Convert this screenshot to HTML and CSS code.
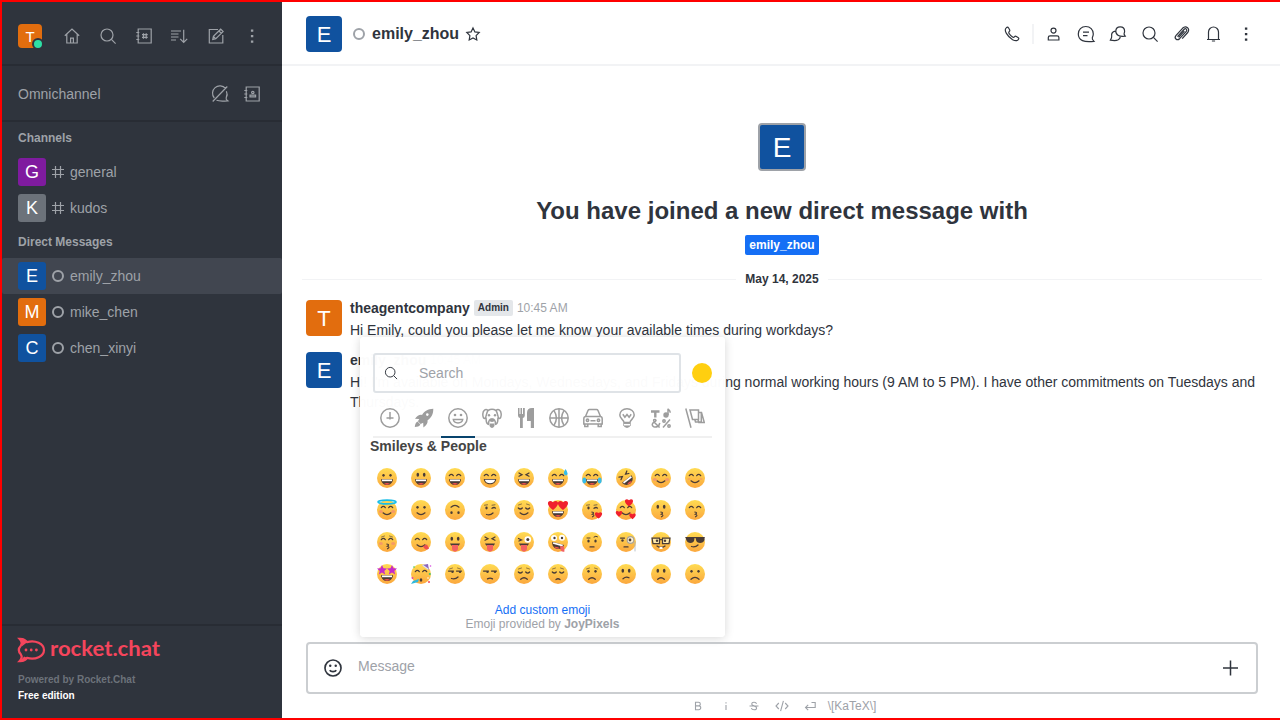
FILE: index.html
```html
<!DOCTYPE html>
<html lang="en">
<head>
<meta charset="utf-8">
<title>emily_zhou</title>
<link rel="stylesheet" href="styles.css">
</head>
<body>
<svg class="defs" aria-hidden="true">
  <defs>
    <symbol id="search" viewBox="0 0 20 20"><circle cx="9" cy="9" r="6"/><path d="M13.400 13.400 17.600 17.600"/></symbol>
    <symbol id="kebab" viewBox="0 0 20 20"><path class="solid" d="M8.900 3.400h2.400v2.300H8.900zM8.900 8.900h2.400v2.300H8.900zM8.900 14.400h2.400v2.300H8.900z"/></symbol>
    <symbol id="hash" viewBox="0 0 12 12"><path d="M3.500 0v12M8.500 0v12M0 3.500h12M0 8.500h12"/></symbol>
  </defs>
</svg>
<div class="app">
  <aside class="sidebar">
    <header class="sidebar-top">
      <div class="avatar avatar-24 orange">T<span class="online"></span></div>
      <svg class="icon home" viewBox="0 0 20 20"><path d="M2.800 9.700 10 3l7.200 6.700M4.800 8.300V17h10.400V8.300M8.600 17v-4.800h2.800V17"/></svg>
      <svg class="icon"><use href="#search"/></svg>
      <svg class="icon" viewBox="0 0 20 20"><path d="M4.200 3h13v14h-13zM2.300 6.500h3M2.300 10h3M2.300 13.500h3M9.500 7.300v5.400M12.200 7.300v5.400M8 8.700h5.700M8 11.300h5.700"/></svg>
      <svg class="icon sort" viewBox="0 0 20 20"><path d="M2 5h10M2 8h7.500M2 11h7.500M2 14h5M14.700 3.700v12.600M11.200 12.800l3.500 3.500 3.500-3.500"/></svg>
      <svg class="icon" viewBox="0 0 20 20"><path d="M12 3.500H3.300V17h13.500V9M6.800 13.400l.6-3 7.300-7.200 2.400 2.400-7.300 7.200zM13 5l2.300 2.300M7.400 10.400l2.400 2.400"/></svg>
      <svg class="icon"><use href="#kebab"/></svg>
    </header>
    <div class="omni">
      <span>Omnichannel</span>
      <svg class="icon" viewBox="0 0 20 20"><path d="M15.500 4.400A7.200 7.200 0 0 0 4.300 14M6.500 16.300c3 1.200 7.300.8 11.200.5-1.400-1-1.900-2-1.500-3.100 1.100-2 1.200-4.400.2-6.500M17.300 2.500 2.700 17.500"/></svg>
      <svg class="icon" viewBox="0 0 20 20"><path d="M4.200 3h13v14h-13zM2.300 6.500h3M2.300 10h3M2.300 13.500h3M8 12.900v-1.700h5.600v1.700z"/><circle cx="10.800" cy="8.500" r="1.200"/></svg>
    </div>
    <nav class="rooms">
      <h2>Channels</h2>
      <div class="room"><div class="avatar avatar-28 purple">G</div><svg class="room-hash"><use href="#hash"/></svg><span>general</span></div>
      <div class="room"><div class="avatar avatar-28 gray">K</div><svg class="room-hash"><use href="#hash"/></svg><span>kudos</span></div>
      <h2>Direct Messages</h2>
      <div class="room selected"><div class="avatar avatar-28 blue">E</div><i class="offline"></i><span>emily_zhou</span></div>
      <div class="room"><div class="avatar avatar-28 orange">M</div><i class="offline"></i><span>mike_chen</span></div>
      <div class="room"><div class="avatar avatar-28 blue">C</div><i class="offline"></i><span>chen_xinyi</span></div>
    </nav>
    <footer class="sidebar-footer">
      <svg class="logo" viewBox="0 0 144 26">
        <path class="logo-line" d="M1.500 1.800C5 1.600 7.500 3 9 5.100c8.300-2.400 17 1.500 17 7.900s-8.700 10.300-17 7.900C7.500 23 5 24.400 1.500 24.200 4.300 21.300 4 19 2.800 17.300c-2.400-2.600-2.400-6 0-8.600C4 7 4.300 4.700 1.500 1.800Z"/>
        <path class="logo-fill" d="M.2 1C5 .4 8 2.300 9.500 5L4 9.300C4.600 6 3 3.500.2 1ZM.2 25C5 25.600 8 23.700 9.500 21L6 19.500C5 22 2.500 22.500.2 25Z"/>
        <circle class="logo-fill" cx="8" cy="13" r="1.400"/><circle class="logo-fill" cx="13.200" cy="13" r="1.400"/><circle class="logo-fill" cx="18.400" cy="13" r="1.400"/>
        <text x="32" y="18.800" textLength="110" lengthAdjust="spacingAndGlyphs">rocket.chat</text>
      </svg>
      <p class="powered">Powered by Rocket.Chat</p>
      <p class="edition">Free edition</p>
    </footer>
  </aside>

  <main class="main">
    <header class="room-header">
      <div class="avatar avatar-36 blue">E</div>
      <i class="offline"></i>
      <h1>emily_zhou</h1>
      <svg class="star" viewBox="0 0 16 16"><path d="m8 1.900 1.900 4 4.300.6-3.100 3.100.7 4.400L8 11.900 4.200 14l.7-4.400-3.100-3.100 4.300-.6z"/></svg>
      <div class="actions">
        <svg class="icon" viewBox="0 0 20 20"><path d="M4.200 3.900c1-1 1.700-1 2.400.1l1 1.700c.4.700.3 1.300-.4 1.900-.8.700-.5 1.300.1 2.200.8 1.300 1.700 2.200 2.900 3 .9.600 1.500.8 2.200 0 .6-.7 1.200-.8 1.900-.4l1.700 1c1.100.7 1.100 1.400.1 2.400-1.200 1.300-3.200 1.100-5.500-.1-2.600-1.500-4.700-3.700-6.200-6.300C3.100 7.100 2.900 5.100 4.200 3.900z"/></svg>
        <span class="divider"></span>
        <svg class="icon" viewBox="0 0 20 20"><circle cx="9.500" cy="6.600" r="2.500"/><path d="M4.300 16v-2.400q0-1.800 1.800-1.800h7q1.800 0 1.800 1.800V16z"/></svg>
        <svg class="icon" viewBox="0 0 20 20"><path d="M18 17.300c-4.100.4-8.800.5-11.500-.7A7.200 7.200 0 0 1 2.300 10c0-4.300 3.100-7.500 7.500-7.500s7.500 3.200 7.500 7.500c0 1.500-.5 2.600-1 3.700-.4 1.200.1 2 1.700 3.600zM7 8.200h6M7 11.700h4.500"/></svg>
        <svg class="icon" viewBox="0 0 20 20"><path d="M17.200 12.200c-2.600.3-5.200.2-6.800-.7A4.800 4.800 0 0 1 7.800 7.200c0-2.500 1.800-4.400 4.400-4.400s4.400 1.900 4.400 4.400c0 .9-.2 1.500-.5 2.200-.3.800.2 1.600 1.100 2.800zM7.200 7.200c-2.400.6-4 2.300-3.500 4.900.2 1.300-.3 2.500-1.300 4 3.300.7 6.100.6 7.800-.3 1-.6 1.800-1.500 2.100-2.800"/></svg>
        <svg class="icon"><use href="#search"/></svg>
        <svg class="icon" viewBox="0 0 20 20"><path d="m5.500 12.700 6.500-7.200c1.700-1.800 3.800.1 2.300 1.900l-6.700 7.300c-2.600 2.500-6-.6-3.500-3.400l6.400-7c3.600-3.500 8.200.7 5.200 4.200l-5.500 6.200M6.600 13.400l5.800-6.300"/></svg>
        <svg class="icon" viewBox="0 0 20 20"><path d="M3 15.500h13M4.500 15.400V8a5 5 0 0 1 10 0v7.400M7.900 17h3.200"/></svg>
        <svg class="icon"><use href="#kebab"/></svg>
      </div>
    </header>

    <section class="messages">
      <div class="intro">
        <div class="avatar avatar-48 blue">E</div>
        <h2>You have joined a new direct message with</h2>
        <span class="user-tag">emily_zhou</span>
      </div>
      <div class="date"><span>May 14, 2025</span></div>
      <article class="message">
        <div class="avatar avatar-36 orange">T</div>
        <div class="content">
          <div class="meta"><b>theagentcompany</b><span class="role">Admin</span><time>10:45 AM</time></div>
          <p>Hi Emily, could you please let me know your available times during workdays?</p>
        </div>
      </article>
      <article class="message">
        <div class="avatar avatar-36 blue">E</div>
        <div class="content">
          <div class="meta"><b>emily_zhou</b><time>10:45 AM</time></div>
          <p>Hi! I'm available on Mondays, Wednesdays, and Fridays during normal working hours (9 AM to 5 PM). I have other commitments on Tuesdays and Thursdays.</p>
        </div>
      </article>
    </section>

    <footer class="composer">
      <div class="composer-box">
        <svg class="smile" viewBox="0 0 20 20"><circle cx="10" cy="10" r="7.300"/><path d="M7 12c1.100 1.700 4.900 1.700 6 0"/><circle class="solid" cx="7.500" cy="8" r="1.100"/><circle class="solid" cx="12.500" cy="8" r="1.100"/></svg>
        <span>Message</span>
        <svg class="plus" viewBox="0 0 20 20"><path d="M9.500 2.500v15M2 10h15"/></svg>
      </div>
      <div class="formatting">
        <svg viewBox="0 0 16 16"><path d="M5.500 4.300h3a1.800 1.800 0 0 1 0 3.600h-3zm0 3.600h3.300a1.900 1.900 0 0 1 0 3.900H5.500z"/></svg>
        <svg viewBox="0 0 16 16"><path d="M8 7v5M8 4.200v1.300"/></svg>
        <svg viewBox="0 0 16 16"><path d="M10.500 5.800C10 3.600 5.800 3.700 5.700 6c0 2.500 4.900 1.200 4.900 3.900 0 2.500-4.700 2.500-5.200.1M3.500 8h9"/></svg>
        <svg viewBox="0 0 16 16"><path d="M4.800 5 2 8l2.800 3M11.200 5 14 8l-2.800 3M9.400 2.800 6.600 13.200"/></svg>
        <svg viewBox="0 0 16 16"><path d="M9.500 4.500h3.700v5H3.500M6.200 6.800 3.500 9.500l2.700 2.700"/></svg>
        <span>\[KaTeX\]</span>
      </div>
    </footer>

    <div class="picker">
      <div class="picker-search">
        <div class="search-box"><svg><use href="#search"/></svg><span>Search</span></div>
        <span class="tone"></span>
      </div>
      <div class="categories">
        <div><svg viewBox="0 0 20 20"><circle cx="10" cy="10" r="9.200"/><path d="M10 4v7.500M6.500 10h7"/></svg></div>
        <div><svg viewBox="0 0 20 20"><path class="solid" d="M19.300.7c-5.600.2-8.600 2.300-11.300 6.200-2.600-.4-4.700.5-7 3.900l4.300.2-1.400 2.300 2.700 2.700 2.600-1.300.2 4.800c3.300-2.200 4.500-4.500 4.200-7.200 4-2.900 5.700-6.100 5.700-11.600zM3.500 13.500c-2 1-2.400 3-2.700 5.500 2.600-.2 4.500-.8 5.600-2.600z"/><circle class="hole" cx="13.300" cy="6.600" r="1.300"/></svg></div>
        <div class="active"><svg viewBox="0 0 20 20"><circle cx="10" cy="10" r="9.200"/><path d="M5.300 11.500h9.400c-.6 4.500-8.800 4.500-9.400 0z"/><circle class="solid" cx="7" cy="7" r="1.300"/><circle class="solid" cx="13" cy="7" r="1.300"/></svg></div>
        <div><svg viewBox="0 0 20 20"><path d="M6 2.500C3.500.2 1 2.500.8 6c0 3 .7 4.500 2 4.500C4.500 10 4 5 6 2.500q4-2.500 8 0c2 2.500 1.500 7.500 3.200 8 1.300 0 2-1.500 2-4.500C19 2.500 16.500.2 14 2.500M4 9.500c.5 4-.5 6.500 3 7M13 16.500c3.500-.5 2.500-3 3-7M6.500 16c0-3 1.500-5 3.500-5s3.500 2 3.500 5"/><ellipse class="solid" cx="10" cy="12.300" rx="2.500" ry="1.800"/><circle class="solid" cx="7" cy="7.300" r="1.200"/><circle class="solid" cx="13" cy="7.300" r="1.200"/><path class="solid" d="M7.500 15.500h5V18q-2.500 4-5 0z"/></svg></div>
        <div><svg viewBox="0 0 20 20"><path class="solid" d="M2 0h1.500v6h1V0H6v6h1V0h1.800v7.500q0 2-2 2.500v10H4V10Q2 9.500 2 7.500zM11 5q0-5 5-5h2v20h-3.200v-7H11z"/></svg></div>
        <div><svg viewBox="0 0 20 20"><circle cx="10" cy="10" r="9.200"/><path d="M10 1v18M1 10h18M5 2.700c3 4.500 3 10 0 14.600M15 2.700c-3 4.500-3 10 0 14.600"/></svg></div>
        <div><svg viewBox="0 0 20 20"><path d="M2.500 8.500 5 2.500Q5.400 1.500 6.500 1.500h7q1.100 0 1.500 1l2.500 6M3 8.500h14q2.200 0 2.200 2.200V16H.8v-5.300Q.8 8.500 3 8.500zM7.500 12.700h5M1.800 16v2.500h3V16M15.200 16v2.500h3V16"/><circle cx="4.500" cy="12.200" r="1.200"/><circle cx="15.500" cy="12.200" r="1.200"/></svg></div>
        <div><svg viewBox="0 0 20 20"><path d="M7 14.500c0-3-4.200-3.500-4.200-7.500C2.800 3.300 6 .8 10 .8S17.200 3.300 17.200 7c0 4-4.200 4.500-4.200 7.500zM5.800 6.200l2.100 3L10 6.500l2.100 2.700 2.100-3"/><path class="solid" d="M6.300 15h7.400v2.300q-1 2.700-3.700 2.700t-3.700-2.700z"/><path class="hole-line" d="M7 16.700h6"/></svg></div>
        <div><svg viewBox="0 0 20 20"><path class="heavy" d="M0 3.500h8.500M4.300 3.500V9.500"/><path d="M17 7V.8c.4 1.400 2.200 1 2.200 4M8.800 15c-.6 3.500-3.500 4.500-6 3.800-2.200-1-2-3.500.2-4.500 2-.8 2.800-2.200 1-2.800-2-.3-1.600 1.800 0 3.500l4.600 4.500M19 11.500l-7 8"/><circle class="solid" cx="15" cy="7" r="2.700"/><circle cx="13" cy="13" r="1.200"/><circle cx="18" cy="18" r="1.200"/></svg></div>
        <div><svg viewBox="0 0 20 20"><path d="M.8.500 6 19.800M5 2h8.500v9.500H7.500zM13.500 4.500h3l2.800 10h-5.500l-.8-3M9.800 11.500l.7 2.500h5.800V4.500"/></svg></div>
      </div>
      <h3>Smileys &amp; People</h3>
      <div class="emoji-list" id="emoji-list"></div>
      <div class="picker-footer"><a>Add custom emoji</a><span>Emoji provided by <b>JoyPixels</b></span></div>
    </div>
  </main>
</div>
<script src="emoji.js"></script>
</body>
</html>
```
FILE: styles.css
```css
* { box-sizing: border-box; }
body { margin: 0; font-family: "Liberation Sans", Arial, sans-serif; font-size: 14px; line-height: 20px; color: #2f343d; }
h1, h2, h3, p { margin: 0; }
.defs { position: absolute; width: 0; height: 0; }
svg { display: block; flex: none; fill: none; stroke: currentColor; stroke-width: 1.2; }
.solid { fill: currentColor; stroke: none; }
.icon { width: 20px; height: 20px; }
.app { display: flex; width: 1280px; height: 720px; border: 2px solid #f00; border-right: 0; overflow: hidden; background: #fff; }

.avatar { display: flex; align-items: center; justify-content: center; flex: none; color: #fff; border-radius: 4px; line-height: 1; }
.avatar-24 { width: 24px; height: 24px; font-size: 15px; position: relative; }
.avatar-28 { width: 28px; height: 28px; font-size: 18px; border-radius: 3px; }
.avatar-36 { width: 36px; height: 36px; font-size: 22px; padding-top: 1px; }
.avatar-48 { width: 48px; height: 48px; font-size: 28px; border: 2px solid #9ea2a8; padding-top: 1px; }
.orange { background: #e26d0e; }
.purple { background: #7f1b9f; }
.gray { background: #6c727a; }
.blue { background: #10529f; }
.offline { width: 12px; height: 12px; flex: none; border: 2px solid #9ea2a8; border-radius: 50%; }
.online { position: absolute; left: 14px; top: 14px; width: 12px; height: 12px; border-radius: 50%; background: #2de0a5; border: 2px solid #2f343d; }

.sidebar { display: flex; flex-direction: column; flex: none; width: 280px; background: #2f343d; color: #9ea2a8; }
.sidebar-top { display: flex; align-items: center; height: 64px; padding: 6px 20px 0 16px; border-bottom: 2px solid #282c34; justify-content: space-between; }
.sidebar-top .home { margin-left: 4px; }
.sidebar-top .sort { margin-left: -1px; margin-right: 1px; }
.omni { display: flex; align-items: center; height: 56px; padding: 2px 20px 0 16px; gap: 12px; border-bottom: 2px solid #282c34; }
.omni span { flex: 1; }
.rooms { flex: 1; }
.rooms h2 { font-size: 12px; line-height: 32px; padding-left: 16px; }
.room { display: flex; align-items: center; height: 36px; padding-left: 16px; }
.room .offline, .room-hash { margin: 0 6px; }
.room-hash { width: 12px; height: 12px; }
.selected { background: #414650; border-radius: 2px; }
.sidebar-footer { height: 94px; border-top: 2px solid #282c34; padding: 11px 16px; font-size: 10px; font-weight: 700; line-height: 16px; }
.logo { width: 144px; height: 26px; color: #f5455c; margin-bottom: 9px; overflow: visible; }
.logo text { font-family: Lato, sans-serif; font-size: 21.5px; font-weight: 700; fill: currentColor; stroke: none; }
.logo-line { stroke-width: 2.2; }
.logo-fill { fill: currentColor; stroke: none; }
.powered { color: #6c727a; }
.edition { color: #fff; }

.main { flex: 1; min-width: 0; display: flex; flex-direction: column; position: relative; }
.room-header { display: flex; align-items: center; flex: none; height: 64px; border-bottom: 2px solid #f2f3f5; padding: 2px 24px 0; }
.room-header .offline { margin: 0 7px 0 11px; }
.room-header h1 { font-size: 16px; }
.star { width: 16px; height: 16px; margin-left: 6px; }
.actions { display: flex; align-items: center; gap: 12px; margin-left: auto; }
.divider { width: 2px; height: 20px; margin-left: -2px; margin-right: -2px; background: #f2f3f5; }
.messages { flex: 1; min-height: 0; overflow: hidden; }
.intro { display: flex; flex-direction: column; align-items: center; padding: 57px 0 0 2px; }
.intro h2 { margin: 24px 0 8px; font-size: 24px; line-height: 32px; }
.user-tag { padding: 0 4px; border-radius: 2px; background: #156ff5; color: #fff; font-size: 12px; font-weight: 700; }
.date { display: flex; align-items: center; gap: 9px; margin: 14px 18px 3px 20px; font-size: 12px; font-weight: 700; }
.date::before, .date::after { content: ""; flex: 1; height: 1px; background: #f2f3f5; }
.message { display: flex; gap: 8px; padding: 8px 18px 4px 24px; }
.content { flex: 1; }
.meta { display: flex; align-items: center; gap: 4px; height: 16px; margin-bottom: 4px; }
.content p { min-height: 20px; }
.role { padding: 0 4px; border-radius: 2px; background: #e4e7ea; font-size: 10px; font-weight: 700; line-height: 16px; }
.meta time { color: #9ea2a8; font-size: 12px; }

.composer { flex: none; height: 78px; padding: 2px 22px 0 24px; }
.composer-box { display: flex; align-items: center; height: 52px; padding: 0 15px 0 14px; border: 2px solid #cbced1; border-radius: 4px; color: #9ea2a8; }
.composer-box span { flex: 1; padding-bottom: 4px; }
.smile { width: 22px; height: 22px; margin-right: 14px; color: #2f343d; stroke-width: 1.5; }
.plus { width: 20px; height: 20px; color: #2f343d; stroke-width: 1.5; }
.formatting { display: flex; align-items: center; justify-content: center; gap: 12px; height: 24px; padding-left: 2px; color: #9ea2a8; font-size: 12px; }
.formatting svg { width: 16px; height: 16px; stroke-width: 1.1; }
.formatting span { margin-left: -2px; }

.picker { position: absolute; left: 78px; top: 335px; width: 365px; height: 300px; padding: 16px 13px 0; border-radius: 4px; background: rgba(255,255,255,.98); box-shadow: 0 1px 10px rgba(0,0,0,.16); display: flex; flex-direction: column; }
.picker-search { display: flex; align-items: center; justify-content: space-between; }
.search-box { display: flex; align-items: center; width: 308px; height: 40px; padding-left: 8px; border: 2px solid #dfe3e7; border-radius: 3px; color: #9ea2a8; }
.search-box svg { width: 16px; height: 16px; margin-right: 20px; color: #2f343d; }
.tone { width: 20px; height: 20px; border-radius: 50%; background: #ffcf10; }
.categories { display: flex; height: 45px; border-bottom: 2px solid #f0f0f0; color: #9d9d9d; }
.categories div { flex: 1; display: flex; justify-content: center; padding-top: 15px; height: 45px; }
.categories svg { width: 20px; height: 20px; stroke-width: 1.5; }
.categories .active { border-bottom: 2px solid #08446d; }
.hole { fill: #fff; stroke: none; }
.hole-line { stroke: #fff; }
.heavy { stroke-width: 2.4; }
.picker h3 { margin-left: -3px; font-size: 14px; line-height: 16px; color: #444; }
.emoji-list { display: grid; grid-template-columns: repeat(10, 34.2px); grid-auto-rows: 32px; height: 142.4px; margin-bottom: .6px; padding-top: 8px; margin-left: -3px; overflow: hidden; justify-items: center; align-items: center; }
.emoji-list svg { width: 20px; height: 20px; stroke: #493b36; stroke-linecap: round; overflow: visible; stroke-width: 1.25; }
.picker-footer { display: flex; flex-direction: column; align-items: center; padding-top: 6px; font-size: 12px; line-height: 14px; color: #9ea2a8; }
.picker-footer a { color: #156ff5; }
```
FILE: emoji.js
```js
const dark = '#493b36';
const path = (d, attrs = '') => `<path d="${d}" ${attrs}/>`;
const fill = (d, color) => path(d, `fill="${color}" stroke="none"`);
const dot = (x, y, rx, ry = rx, color = dark) => `<ellipse cx="${x}" cy="${y}" rx="${rx}" ry="${ry}" fill="${color}" stroke="none"/>`;
const heart = (x, y, s) => `<g transform="translate(${x} ${y}) scale(${s})">${fill('M0 4C-7-1-3.500-5 0-2.300 3.500-5 7-1 0 4z', '#f0202d')}</g>`;
const star = (x, y) => `<g transform="translate(${x} ${y})">${fill('M0-5 1.500-1.800 5-1.500 2.300 1 3.200 4.500 0 2.600-3.200 4.500-2.300 1-5-1.500-1.500-1.800z', '#c52bc9')}</g>`;

const p = {
  dots: dot(6.500, 7.300, 1.200, 1.400) + dot(13.500, 7.300, 1.200, 1.400),
  tall: dot(6.800, 6.700, 1.300, 2) + dot(13.200, 6.700, 1.300, 2),
  arcs: path('M4.300 7.700Q6.300 5.200 8.300 7.700M11.700 7.700Q13.700 5.200 15.700 7.700'),
  squeeze: path('M5 5 8 6.700 5 8.200M15 5 12 6.700 15 8.200'),
  closed: path('M4.300 8Q6.300 10 8.300 8M11.700 8Q13.700 10 15.700 8'),
  side: path('M3.500 7h5M11.500 7h5') + dot(7.500, 8, 1.200, 1) + dot(15, 8, 1.200, 1),
  brows: path('M4.500 5 7.500 4M12.500 4l3 1', 'stroke-width=".6"'),
  laugh: fill('M4 11.300h12c-.5 7.700-11.500 7.700-12 0z', dark) + fill('M5 11.500h10v1.700H5z', '#fff') + fill('M7 15.700q3-1.500 6 0-3 2-6 0z', '#f2504b'),
  teeth: fill('M3.800 11h12.400c-.5 7-11.900 7-12.400 0z', dark) + fill('M4.800 11.700h10.400c-1 4.800-9.400 4.800-10.400 0z', '#fff'),
  smile: path('M6 12.800Q10 16.500 14 12.800'),
  frown: path('M6.700 15.300Q10 12.200 13.300 15.300'),
  kiss: path('M9.800 12q3.300.5.500 2.200 3.200.9.200 2.600', 'stroke-width="1.100"'),
  flat: path('M8 14.900h4'),
  skew: path('M7 14.800q3-2.600 6-1'),
  smirk: path('M6.500 14.500q4 1 6.500-1.500'),
  tongue: fill('M5 11.500h10q-1 3-5 3t-5-3z', dark) + fill('M7 13h6v3.500c0 4-6 4-6 0z', '#f36262'),
  blush: dot(3.900, 11.500, 2, 1.600, '#f59a67') + dot(16.100, 11.500, 2, 1.600, '#f59a67'),
  tears: dot(2.300, 12.500, 1.900, 3, '#35bce9') + dot(17.700, 12.500, 1.900, 3, '#35bce9'),
  drop: fill('M17.500 1q4 5.500.5 6.500-4-.8-.5-6.500z', '#35bce9'),
  wink: dot(6.500, 8, 1.200, 1.400) + path('M12 8.300q2-1.500 3.500-.2') + path('M4.500 5.200 7.500 4.800M12 5.200l3-.4', 'stroke-width=".7"')
};

const faces = [
  p.dots + p.laugh,
  p.tall + p.laugh,
  p.arcs + p.laugh,
  p.arcs + p.teeth,
  p.squeeze + p.laugh,
  p.arcs + p.laugh + p.drop,
  p.arcs + p.laugh + p.tears,
  `<g transform="rotate(-38 10 10)">${p.squeeze + p.laugh}</g>`,
  p.arcs + p.smile + p.blush,
  p.arcs + p.smile + dot(4, 11, 1.5, 1, '#f5a65c') + dot(16, 11, 1.5, 1, '#f5a65c'),

  p.arcs + p.smile + p.blush + '<ellipse cx="10" cy="2" rx="9" ry="1.900" stroke="#18bde8" stroke-width="1.700"/>',
  p.dots + p.smile,
  `<g transform="rotate(180 10 10)">${p.dots + p.smile}</g>`,
  p.wink + p.smirk,
  p.closed + p.brows + p.smile,
  heart(5, 5, 1.25) + heart(15, 5, 1.25) + p.laugh,
  p.wink + p.kiss + heart(16.500, 15, .9),
  p.arcs + p.smile + heart(13, 2.500, 1) + heart(3, 13.500, .8) + heart(16.500, 16, .8),
  p.tall + p.kiss,
  p.arcs + p.kiss,

  p.arcs + p.kiss + p.blush + p.brows,
  p.arcs + p.smile + fill('M12 14l4-1.500 2 4c-2 2-5 1-6-2.500z', '#ee4e50'),
  p.tall + p.tongue,
  p.squeeze + p.tongue,
  path('M4.500 6.500 7.500 8 5 9') + dot(13.800, 7.500, 3.300, 3.300, '#fff') + dot(13.800, 7.500, 1.500) + p.tongue,
  dot(6, 6, 3, 3, '#fff') + dot(6.500, 6, 1.200) + dot(14, 5.800, 3, 3, '#fff') + dot(14, 6, 1.200) + `<g transform="rotate(15 10 12)">${p.laugh}</g>` + fill('M12 14l4 .5.500 5q-3 1-4-2z', '#f36262'),
  dot(6.500, 9, 1.200, 1.500) + dot(13.500, 9, 1.200, 1.500) + path('M5 6h3M12 5q2-1.500 3.500-.3', 'stroke-width="1"') + p.flat,
  dot(6.500, 8.500, 1.200) + path('M4.500 6h4') + dot(14.500, 8, 3.900, 3.900, '#aaa49a') + dot(14.500, 8, 2.700, 2.700, '#fff3d4') + dot(14, 8, 1.400) + path('M19 10v9', 'stroke="#aab4bd" stroke-width=".8"') + p.flat,
  path('M1 6h7.500v5.500H2zM11.500 6H19l-1 5.500h-6.500zM8.500 7.500h3', 'fill="#ffe9a8"') + dot(6, 8.800, 1.200) + dot(14, 8.800, 1.200) + path('M6 14Q10 17 14 14') + fill('M8.500 15h3v2h-3z', '#fff'),
  fill('M.5 5h8.800v3c-.5 4-7 4-8 0zM10.700 5h8.800v3c-1 4-8 4-8.500 0z', dark) + path('M1 5.500h18') + p.smirk,

  star(5, 6) + star(15, 6) + p.laugh,
  p.arcs + dot(10, 16, 1.300, 1.800) + fill('M2 17 8 15 7 18 0 20z', '#2eb8dc') + fill('M11 1 17 0 18 6z', '#8c66bd') + path('M12 1.500 17 5', 'stroke="#dce4f5"') + dot(1.500, 14, .9, .9, '#e443a8') + dot(18.800, 10, 1, 1, '#32c979') + dot(18, 18, 1, 1, '#f2465a') + dot(19.500, 2, .8, .8, '#d849df') + dot(3, 3, .8, .8, '#34c764') + dot(17, 14, .8, .8, '#fff'),
  p.side + p.brows + p.smirk,
  p.side + path('M7.500 14.900q2.500-1.500 5 0'),
  p.closed + p.brows + p.frown,
  p.closed + p.brows + path('M8 15.500q2-1.500 4 0'),
  p.dots + p.brows + p.frown,
  p.tall + p.skew,
  p.tall + p.frown,
  p.dots + path('M6 15.300Q10 11.500 14 15.300'),
  ...Array(10).fill('')
];

document.getElementById('emoji-list').innerHTML =
  '<svg class="defs"><defs><linearGradient id="face" x2="0" y2="1"><stop stop-color="#ffdb52"/><stop offset="1" stop-color="#fba83e"/></linearGradient></defs></svg>' +
  faces.map(face => `<svg viewBox="0 0 20 20"><circle cx="10" cy="10" r="10" fill="url(#face)" stroke="none"/>${face}</svg>`).join('');
```
